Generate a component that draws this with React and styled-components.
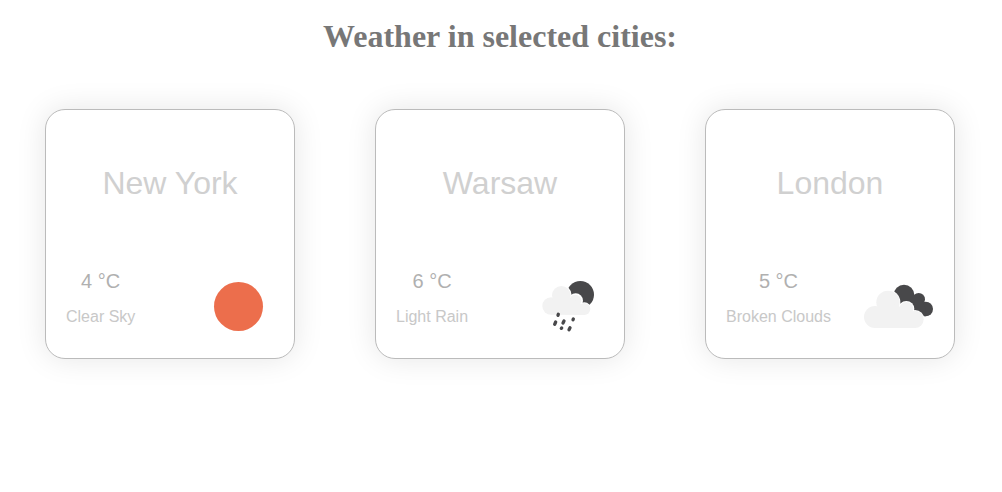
import React from "react";
import styled, { createGlobalStyle } from "styled-components";

const GlobalStyle = createGlobalStyle`
  * { box-sizing: border-box; }
  body { margin: 0; background: #fff; font-family: "Liberation Sans", Arial, sans-serif; }
`;

const Page = styled.main`
  padding: 16px 7px 40px 5px;
`;

const Title = styled.h1`
  margin: 0 0 53px;
  color: #777;
  font: bold 32px/40px "Liberation Serif", "Times New Roman", serif;
  text-align: center;
`;

const Cards = styled.ul`
  display: flex;
  flex-wrap: wrap;
  justify-content: space-around;
  gap: 40px 0;
  margin: 0;
  padding: 0;
  list-style: none;
`;

const Card = styled.li`
  display: flex;
  flex-direction: column;
  justify-content: space-between;
  width: 250px;
  height: 250px;
  padding: 53px 20px 26px;
  border: 1px solid #bbb;
  border-radius: 20px;
  background: #fff;
  box-shadow: 0 0 30px rgba(0, 0, 0, 0.1);
`;

const City = styled.h2`
  margin: 0;
  color: #d0d0d0;
  font-size: 32px;
  font-weight: normal;
  line-height: 40px;
  text-align: center;
`;

const Details = styled.div`
  display: flex;
  justify-content: space-between;
  align-items: flex-end;
`;

const Reading = styled.div`
  padding-bottom: 5px;
  text-align: center;
`;

const Temperature = styled.p`
  margin: 0 0 14px;
  color: #b0b0b0;
  font-size: 20px;
  line-height: 24px;
`;

const Condition = styled.p`
  margin: 0;
  color: #c8c8c8;
  font-size: 16px;
  line-height: 20px;
`;

const Icon = styled.svg`
  display: block;
  flex: none;
  width: 70px;
  height: 52px;
`;

const ClearIcon = () => (
  <Icon viewBox="0 0 210 156" aria-hidden="true">
    <circle cx="103.5" cy="79.5" r="73.5" fill="#ec6e4c" />
  </Icon>
);

const RainIcon = () => (
  <Icon viewBox="-3 30 210 156" aria-hidden="true">
    <circle cx="136" cy="74" r="41" fill="#48484a" />
    <g fill="#fff">
      <circle cx="79" cy="76" r="31" />
      <circle cx="122" cy="92" r="22" />
      <circle cx="148" cy="118" r="21" />
    </g>
    <g fill="#f2f2f2">
      <circle cx="48" cy="108" r="26" />
      <circle cx="79" cy="76" r="28" />
      <circle cx="121" cy="92" r="18" />
      <circle cx="148" cy="117" r="18" />
      <path d="M48 134V100L79 76L121 92L148 110V135z" />
    </g>
    <g stroke="#48484a" strokeWidth="10" strokeLinecap="round">
      <path d="M70 133l-1 3M62 156l-3 7M87 153l-3 6M115 147l-1 2M80 174l-1 1M105 173l-3 6" />
    </g>
  </Icon>
);

const CloudsIcon = () => (
  <Icon viewBox="27 30 210 156" aria-hidden="true">
    <g fill="#48484a">
      <circle cx="147" cy="75" r="31" />
      <circle cx="191" cy="88" r="19" />
      <circle cx="212" cy="117" r="22" />
      <path d="M147 75h44l21 42v22h-15l-50-42z" />
    </g>
    <g fill="#fff">
      <circle cx="99" cy="97" r="37" />
      <circle cx="154" cy="117" r="24" />
      <circle cx="180" cy="148" r="28" />
    </g>
    <g fill="#f2f2f2">
      <circle cx="60" cy="141" r="33" />
      <circle cx="99" cy="97" r="35" />
      <circle cx="154" cy="117" r="21" />
      <circle cx="180" cy="148" r="26" />
      <path d="M60 174V120L99 97L154 117L180 140V174z" />
    </g>
  </Icon>
);

const cities = [
  { name: "New York", temperature: 4, condition: "Clear Sky", Picture: ClearIcon },
  { name: "Warsaw", temperature: 6, condition: "Light Rain", Picture: RainIcon },
  { name: "London", temperature: 5, condition: "Broken Clouds", Picture: CloudsIcon },
];

export default function App() {
  return (
    <>
      <GlobalStyle />
      <Page>
        <Title>Weather in selected cities:</Title>
        <Cards>
          {cities.map(({ name, temperature, condition, Picture }) => (
            <Card key={name}>
              <City>{name}</City>
              <Details>
                <Reading>
                  <Temperature>{temperature} °C</Temperature>
                  <Condition>{condition}</Condition>
                </Reading>
                <Picture />
              </Details>
            </Card>
          ))}
        </Cards>
      </Page>
    </>
  );
}
